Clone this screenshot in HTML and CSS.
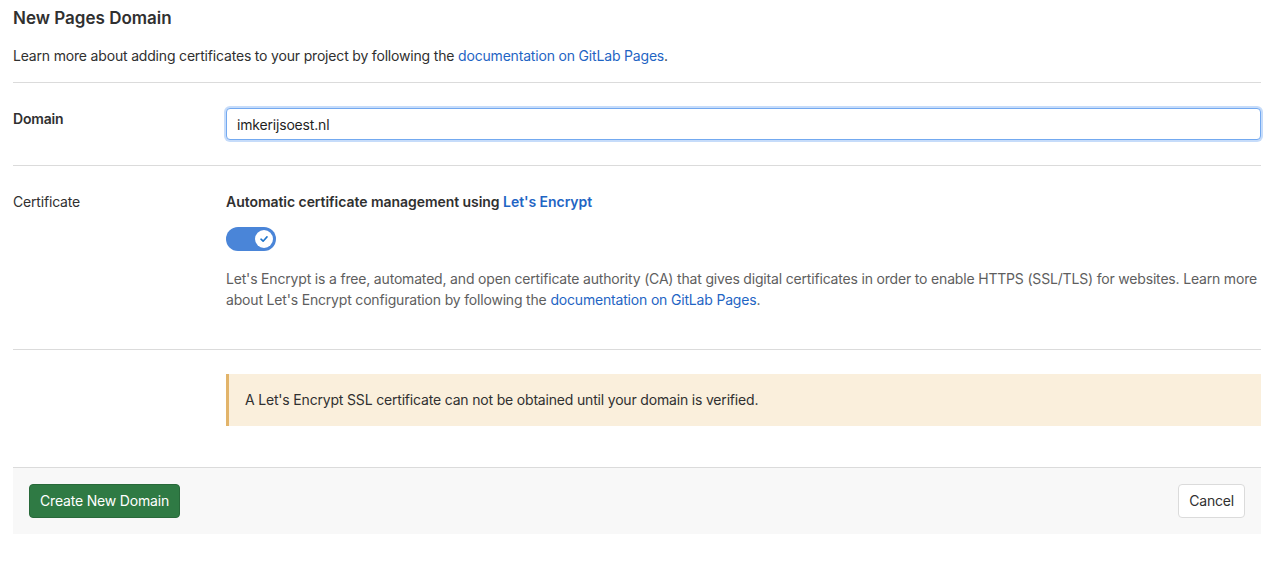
FILE: index.html
```html
<!DOCTYPE html>
<html lang="en">
<head>
<meta charset="utf-8">
<title>New Pages Domain</title>
<link rel="stylesheet" href="styles.css">
</head>
<body>
<div class="page">
  <h3 class="page-title">New Pages Domain</h3>
  <p class="intro">Learn more about adding certificates to your project by following the <a href="#">documentation on GitLab Pages</a>.</p>
  <form class="domain-form">
    <div class="form-row domain-row">
      <label class="row-label bold" for="domain">Domain</label>
      <div class="row-body">
        <input id="domain" class="text-input" type="text" value="imkerijsoest.nl">
      </div>
    </div>
    <div class="form-row cert-row">
      <div class="row-label">Certificate</div>
      <div class="row-body">
        <div class="cert-title">Automatic certificate management using <a href="#">Let's Encrypt</a></div>
        <div class="toggle">
          <span class="knob">
            <svg width="10" height="10" viewBox="0 0 10 10"><path d="M2 5.2 L4.1 7.2 L8 2.9" fill="none" stroke="#1f75cb" stroke-width="1.6" stroke-linecap="round" stroke-linejoin="round"/></svg>
          </span>
        </div>
        <p class="help">Let's Encrypt is a free, automated, and open certificate authority (CA) that gives digital certificates in order to enable HTTPS (SSL/TLS) for websites. Learn more about Let's Encrypt configuration by following the <a href="#">documentation on GitLab Pages</a>.</p>
      </div>
    </div>
    <div class="form-row alert-row">
      <div class="row-label"></div>
      <div class="row-body">
        <div class="alert">A Let's Encrypt SSL certificate can not be obtained until your domain is verified.</div>
      </div>
    </div>
    <div class="form-actions">
      <button type="button" class="btn btn-success">Create New Domain</button>
      <button type="button" class="btn btn-default">Cancel</button>
    </div>
  </form>
</div>
</body>
</html>
```
FILE: styles.css
```css
* { box-sizing: border-box; }
html, body { margin: 0; padding: 0; background: #fff; }
body {
  font-family: Inter, "Noto Sans", "Liberation Sans", sans-serif;
  font-size: 14px;
  line-height: 20px;
  letter-spacing: -0.18px;
  color: #303030;
}
.page { padding: 0 18px 0 13px; }
a { color: #1f65c4; text-decoration: none; }
.page-title {
  margin: 0;
  padding-top: 8px;
  font-size: 17px;
  line-height: 20px;
  font-weight: 600;
  letter-spacing: 0;
  color: #303030;
}
.intro { margin: 18px 0 0; line-height: 20px; }
.domain-form { margin-top: 16px; border-top: 1px solid #dbdbdb; }
.form-row {
  display: grid;
  grid-template-columns: 213px 1fr;
  border-bottom: 1px solid #dbdbdb;
}
.row-label { line-height: 20px; }
.bold { font-weight: 600; }
.domain-row { padding: 24px 0 25px; }
.domain-row .row-label { padding-top: 2px; }
.text-input {
  display: block;
  width: 100%;
  height: 32px;
  padding: 0 10px;
  font-family: inherit;
  font-size: 14px;
  letter-spacing: -0.18px;
  color: #1f1f1f;
  border: 1px solid #73a9f0;
  border-radius: 4px;
  box-shadow: 0 0 0 2px #c6dcfa;
  outline: none;
  margin-top: 1px;
}
.cert-row { padding: 26px 0 39px; }
.cert-title { font-weight: 600; letter-spacing: -0.05px; }
.toggle {
  margin-top: 15px;
  width: 50px;
  height: 24px;
  border-radius: 12px;
  background: #4a85d8;
  display: flex;
  align-items: center;
  justify-content: flex-end;
  padding-right: 3px;
}
.knob {
  width: 18px;
  height: 18px;
  border-radius: 50%;
  background: #fff;
  display: flex;
  align-items: center;
  justify-content: center;
}
.help { margin: 17px 0 0; color: #5e5e5e; line-height: 21px; }
.alert-row { padding: 24px 0 41px; border-bottom: 1px solid #dbdbdb; }
.alert {
  background: #faefdc;
  border-left: 3px solid #e2b46a;
  padding: 16px;
  line-height: 20px;
  color: #303030;
}
.form-actions {
  background: #f8f8f8;
  padding: 16px;
  display: flex;
  justify-content: space-between;
  align-items: center;
  height: 66px;
}
.btn {
  font-family: inherit;
  font-size: 14px;
  line-height: 20px;
  letter-spacing: -0.18px;
  height: 34px;
  border-radius: 4px;
  padding: 0 10px;
  cursor: pointer;
}
.btn-success {
  background: #2f7a44;
  border: 1px solid #28693a;
  color: #fff;
}
.btn-default {
  background: #fff;
  border: 1px solid #dbdbdb;
  color: #303030;
}
```
